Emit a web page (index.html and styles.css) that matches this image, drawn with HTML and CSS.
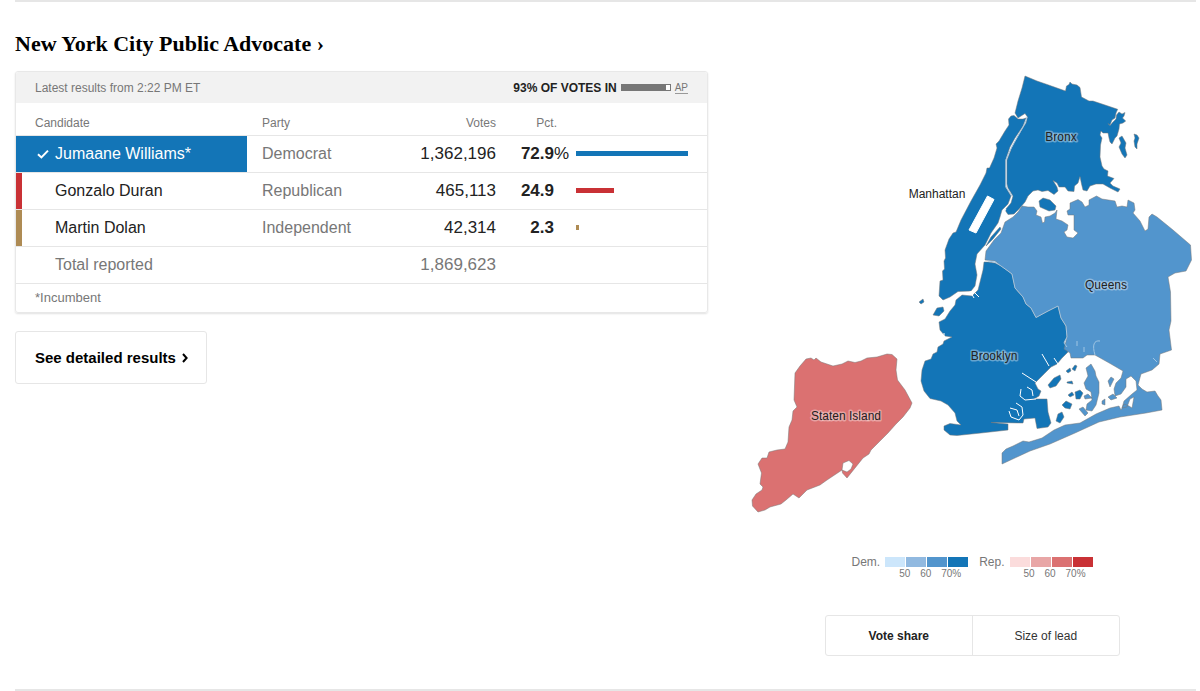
FILE: index.html
```html
<!DOCTYPE html>
<html lang="en">
<head>
<meta charset="utf-8">
<meta name="viewport" content="width=device-width, initial-scale=1">
<title>New York City Public Advocate</title>
<link rel="stylesheet" href="styles.css">
</head>
<body>
<main class="race">
  <section class="results">
    <h2 class="title"><a href="#race">New York City Public Advocate ›</a></h2>
    <div class="card">
      <header class="card-head">
        <span class="updated">Latest results from 2:22 PM ET</span>
        <span class="reporting"><strong>93% OF VOTES IN</strong><span class="meter"><span class="meter-fill" style="width:93%"></span></span><a class="source" href="#ap">AP</a></span>
      </header>
      <table class="table">
        <thead>
          <tr><th class="c-name">Candidate</th><th class="c-party">Party</th><th class="c-votes">Votes</th><th class="c-pct">Pct.</th><th class="c-bar"></th></tr>
        </thead>
        <tbody>
          <tr class="dem winner">
            <td class="c-name"><div class="name"><svg class="check" viewBox="0 0 12 10" aria-label="Winner"><path d="M1 5.2 4.4 8.4 11 1.6"/></svg>Jumaane Williams*</div></td>
            <td class="c-party">Democrat</td><td class="c-votes">1,362,196</td>
            <td class="c-pct">72.9<span class="sign">%</span></td>
            <td class="c-bar"><div class="bar" style="width:100%"></div></td>
          </tr>
          <tr class="rep">
            <td class="c-name"><div class="name">Gonzalo Duran</div></td>
            <td class="c-party">Republican</td><td class="c-votes">465,113</td>
            <td class="c-pct">24.9<span class="sign"></span></td>
            <td class="c-bar"><div class="bar" style="width:34%"></div></td>
          </tr>
          <tr class="ind">
            <td class="c-name"><div class="name">Martin Dolan</div></td>
            <td class="c-party">Independent</td><td class="c-votes">42,314</td>
            <td class="c-pct">2.3<span class="sign"></span></td>
            <td class="c-bar"><div class="bar" style="width:3%"></div></td>
          </tr>
          <tr class="total">
            <td class="c-name"><div class="name">Total reported</div></td>
            <td></td><td class="c-votes">1,869,623</td><td></td><td></td>
          </tr>
        </tbody>
      </table>
      <p class="note">*Incumbent</p>
    </div>
    <a class="more" href="#detail">See detailed results <svg class="chevron" viewBox="0 0 6 10" aria-hidden="true"><path d="M1 1 4.6 5 1 9"/></svg></a>
  </section>

  <section class="map-panel">
    <svg class="map" viewBox="748 72 448 445" role="img" aria-label="Vote share by borough">
      <g class="boro strong">
        <path d="M1025 76 1037 81 1050 85.500 1065.500 91 1066.500 86 1069 84.500 1070 82 1072 84 1077 85 1080 87.500 1081.500 97 1089 101 1093 101 1105 105 1117.700 109.300 1116 113 1115 118 1112 120 1110 125 1108 123.500 1110 125.500 1113 122 1116 119 1116.500 115 1119 112 1122 114 1125 112.500 1124 116 1122.500 118 1125.700 121 1123 123 1119.500 124 1119 129 1117 136 1115 138 1112 144 1110 142 1109 138 1108 133 1103 133 1101 131 1100 135 1102 138 1100.500 145 1100 157 1102 166 1104 169 1108 171 1107.500 176 1114 178.500 1110 183 1113 186 1120 189 1118 192 1110 188 1103 184 1096 184 1090 186 1087 191 1083 190 1081.500 184 1080 176.500 1078 183 1074.500 186 1074 191.500 1068 191 1065 187 1059 187 1057 183 1053 180.500 1057 187 1058 191 1054 194.500 1048 190.500 1042 191.500 1038 190 1033 191 1028 196 1025 202 1019 209 1014 214 1008 214.500 1005 210 1011 203 1013 196 1008 188 1007 184 1007 160 1012 147 1018 136 1026 123 1027.500 117 1025 113.500 1021 116 1018 118 1015 113 1018 101 1022 88Z"/>
        <path d="M1119 138 1122 136 1126 143 1125 148 1127 155 1125 158 1122 154 1119 147 1121 143ZM1134 134 1137 135 1139 138 1137 144 1137 149 1135 147 1134 141 1135 138ZM1039 201 1043 198 1050 200 1056 206 1055 210 1049 211 1040 207Z"/>
        <path d="M1011 116 1014 115.500 1018 119 1023 119 1026 118 1023 126 1015 138 1010 147 1005.500 160 1005.500 187 1011 196 1008 204 1002 210 1000 217 998 223 991 233 985 245 977 254 975 264 977 275 975 286 971 291 958 291.500 950 297 943 300 939 296 940 281 943 280 942.500 271 944.500 269 944 261 945.500 258 945 250 949 239 953 233 956 232 961 220 971 201 980 185 986 173 987 168 989.500 168 994 158 997 148 996 144 999 141 1005 131 1009 125 1008.500 119Z"/>
        <path d="M988 262 995 263 1001 266 1008 271 1012 274 1015 288 1023 297 1026 304 1031 308 1036 317.500 1048 311 1058 306 1061 318 1066 326 1067 337 1064 342 1067 347 1068 352 1062 358 1057 364 1051 367 1045 373 1038 380 1035 383 1038 389 1041 391 1039 396 1034 399 1047 399 1048 412 1051 423 1048 427 1037 428.500 1035 418 1024 419 1023 423 991 422.500 1008 424 1008 430 981 433 957 435.500 950 435 944 430 944 426 950 423.500 961 425 957 421 955 413 948 405 941 401 930 398.500 924 391 921 381 922 370 925 361 931 359 933 354 937 352 938 347 943 344 944 341 952 337 945 336 940 330 939 322 945 319 950 311 955 305 956 300 962 295 972 296 978 290 981 278 983 270 984 262Z"/>
        <path d="M933 315 937 308 943 307 944 311 939 316ZM919 302 923 299 924 302 921 304ZM986 246 991 237 1000 227 1001 229 993 239Z"/>
        <path d="M1048 385 1054 378 1060 375 1061 379 1056 386 1050 388ZM1066 371 1070 368 1071 371 1068 373ZM1072 369 1075 365 1077 366 1075 371ZM1067 382 1072 381 1073 384 1067 383ZM1068 395 1072 392 1074 395 1070 397ZM1075 392 1080 390 1083 393 1080 399 1076 399ZM1062 405 1066 401 1072 404 1070 409 1065 408ZM1056 421 1058 414 1062 412 1064 417 1060 423Z"/>
      </g>
      <g class="boro medium">
        <path d="M985 260 986 251 994 240 1001 233 1005 222 1013 217 1018 212 1022 206 1028 207 1034 207 1037 211 1036 215 1041 217 1042.500 223 1044.500 222 1045 217 1050 216 1055 213 1057 210 1056 219 1062 221 1068 225 1067 230 1064 232 1067 237 1073 238 1078 233 1074 230 1074 215 1068 215 1067 211 1070 209 1070 203 1078 199.500 1082 202 1085 207 1089 205 1089 200 1096.500 196 1102 199 1115 201 1117 207 1122 206 1127 207 1128 200 1134 203 1135 210 1133 213 1140 221 1145 231 1148 229 1149 217 1152 214 1157 217 1173 230 1190.500 245 1191.500 260 1186 271 1175 273 1168 277 1170.500 292 1171 321 1169 330 1171.500 350 1160 354 1159 364 1152 370 1141 374 1138 385 1142 389 1147 392 1155 391 1158 396 1161 400 1162 410 1146 413 1120 417 1099 422 1075 433 1050 444 1030 451 1002 464 1002 453 1006 449 1013 446 1023 441 1029 442 1042 438 1054 430 1065 425 1080 423 1096 414 1110 408 1119 406 1121 410 1124 404 1129 406 1132 408 1134 397 1130 399 1127 407 1122 408 1124 401 1132 394 1137 390 1136 381 1131 376 1126 379 1126 387 1121 394 1115 396 1114 389 1116 383 1121 378 1123 371 1111 364 1095 355 1087 355 1083 358 1071 358 1070 353 1064 349 1067 337 1066 326 1061 318 1058 306 1048 311 1036 317.500 1031 308 1026 304 1023 297 1015 288 1012 274 1008 271 1001 266 995 261Z"/>
        <path d="M1086 368 1091 364 1095 371 1096 376 1099 382 1099 393 1096 405 1092 411 1086 410 1087 404 1092 400 1091 392 1086 389 1084 383 1088 376ZM1108 381 1111 377 1114 379 1110 387ZM1108 397 1113 394 1117 398 1111 400ZM1102 401 1105 399 1105 405 1102 404ZM1079 409 1083 407 1088 413 1085 416ZM1084 396 1088 394 1092 398 1085 399Z"/>
      </g>
      <g class="boro rep-medium">
        <path d="M811 358 814 360 816 358 821 362 833 366 842 364 848 361 855 362.500 861 361 867 358 877 357 887 354 892 354.500 897 359 896 370 897.500 380 905 390 912 403 910 408 903 417 896 424 888 433 880 441 871 450 869 454 863 458 855 468 847 478 842.500 473 842 470 847 472 851 469 853 464 849 460.500 843 463 842 470 827 480 820 485 807 490 803 494 799 498 793 494 786 500 781 504 770 507 765 510 758 512 752.500 506 752 500 756 494 762 490 763 487 760 484 761.500 473 758 464 762 458 767 458 769 452 777 450 785 449 788 442 789 427 792 420 793 411 797 407 794 400 795 373 800 366 806 359Z"/>
      </g>
      <g class="water">
        <path class="park" d="M987.500 196 994 199.500 976 233 969 230Z"/>
        <path d="M1002 215 1006 209M1022 373 1036 382M1042 354 1049 366M1054 358 1058 364M1021 389 1020 396 1025 400 1036 399M1027 387 1032 390 1033 396M1009 411 1011 417 1019 420 1023 415 1022 407 1016 403M1010 408 1017 410 1019 416M970 291 974 298M975 293 979 297M940 332 941 336 944 336 944 333"/>
      </g>
      <g class="border"><path d="M1027 117C1026 125 1010 147 1006 160V187L1012 196M988 261 995 262 1001 266 1008 271 1012 274 1015 288 1023 297 1026 304 1031 308 1036 317.500 1048 311 1058 306 1061 318 1066 326 1067 337 1064 343 1067 347M1095 355C1092 345 1094 340 1100 341M1077 341V346M1084 347V352M1153 358 1157 362"/></g>
      <g class="labels">
        <text x="1061" y="141">Bronx</text>
        <text x="937" y="198">Manhattan</text>
        <text x="1106" y="289">Queens</text>
        <text x="994" y="360">Brooklyn</text>
        <text x="846" y="420">Staten Island</text>
      </g>
    </svg>

    <div class="legend">
      <div class="scale"><span class="scale-name">Dem.</span>
        <div class="ramp"><i class="d1"></i><i class="d2"></i><i class="d3"></i><i class="d4"></i><span></span><span>50</span><span>60</span><span>70%</span></div>
      </div>
      <div class="scale"><span class="scale-name">Rep.</span>
        <div class="ramp"><i class="r1"></i><i class="r2"></i><i class="r3"></i><i class="r4"></i><span></span><span>50</span><span>60</span><span>70%</span></div>
      </div>
    </div>

    <div class="toggle">
      <button type="button" class="active" aria-pressed="true">Vote share</button>
      <button type="button" aria-pressed="false">Size of lead</button>
    </div>
  </section>
</main>
</body>
</html>
```
FILE: styles.css
```css
* { box-sizing: border-box; }

body {
  margin: 0;
  background: #fff;
  color: #222;
  font-family: "Liberation Sans", Arial, sans-serif;
  font-size: 12px;
}

a { color: inherit; text-decoration: none; }

.race {
  display: grid;
  grid-template-columns: minmax(0, 693fr) minmax(0, 448fr);
  column-gap: 40px;
  margin: 0 4px 0 15px;
  border-top: 2px solid #e6e6e6;
  border-bottom: 2px solid #e6e6e6;
}

.title {
  margin: 27px 0 12px;
  color: #000;
  font: bold 22px/30px "Liberation Serif", serif;
}

.card {
  border: 1px solid #e8e8e8;
  border-radius: 3px;
  box-shadow: 0 1px 2px rgba(0, 0, 0, .12);
  overflow: hidden;
}

.card-head {
  display: flex;
  justify-content: space-between;
  align-items: center;
  height: 31px;
  padding: 0 19px;
  background: #f2f2f2;
  color: #777;
}

.reporting { display: flex; align-items: center; }
.reporting strong { color: #222; }

.meter {
  width: 50px;
  height: 7px;
  margin: 0 4px;
  border: 1px solid #777;
  background: #fff;
}
.meter-fill { display: block; height: 100%; background: #777; }
.source { border-bottom: 1px solid #999; font-size: 10px; line-height: 11px; }

.table {
  width: 100%;
  border-collapse: collapse;
  table-layout: fixed;
  font-size: 16px;
}
.table th {
  height: 32px;
  padding: 8px 0 0;
  color: #777;
  font-size: 12px;
  font-weight: normal;
  text-align: left;
}
.table td { height: 37px; padding: 0; border-top: 1px solid #e6e6e6; }

.table .c-name { width: 231px; }
.table th.c-name { padding-left: 19px; }
.table .c-party { padding-left: 15px; color: #777; }
.table .c-votes { width: 130px; text-align: right; }
.table .c-pct { width: 80px; padding-right: 7px; font-weight: bold; text-align: right; }
.table td.c-votes, .table td.c-pct { font-size: 17px; }
.table th.c-pct { padding-right: 19px; font-weight: normal; }
.table .c-bar { width: 131px; padding-right: 19px; }

.name {
  display: flex;
  align-items: center;
  height: 36px;
  padding-left: 33px;
  border-left: 6px solid transparent;
}
.check {
  width: 12px;
  height: 10px;
  margin: 0 6px 0 -18px;
  fill: none;
  stroke: #fff;
  stroke-width: 2;
}
.sign { display: inline-block; width: 15px; font-weight: normal; text-align: left; }
.bar { height: 5px; }

.dem .bar, .winner .name { background: #1375b7; }
.rep .bar { background: #c93135; }
.ind .bar { background: #ae8b54; }
.winner .name { color: #fff; }
.rep .name { border-color: #c93135; }
.ind .name { border-color: #ae8b54; }
.table .total td { color: #777; }

.note {
  margin: 0;
  padding: 0 19px;
  border-top: 1px solid #e6e6e6;
  color: #777;
  font-size: 13px;
  line-height: 28px;
}

.more {
  display: inline-flex;
  align-items: center;
  gap: 6px;
  height: 53px;
  margin-top: 18px;
  padding: 0 18px 0 19px;
  border: 1px solid #e6e6e6;
  border-radius: 3px;
  color: #000;
  font-size: 15px;
  font-weight: bold;
}
.chevron { width: 6px; height: 10px; fill: none; stroke: #000; stroke-width: 2; }

.map-panel { display: flex; flex-direction: column; align-items: center; padding: 70px 0 33px; }
.map { display: block; width: 100%; }

.boro { stroke: #777; stroke-width: .5; stroke-linejoin: round; }
.strong { fill: #1375b7; }
.medium { fill: #5295cd; }
.rep-medium { fill: #db7171; }
.water path { fill: none; stroke: #fff; stroke-width: 1; }
.water .park { fill: #fff; }
.border path { fill: none; stroke: #9fc5e3; stroke-width: 1; }
.labels text {
  fill: #222;
  stroke: rgba(255, 255, 255, .35);
  stroke-width: 3;
  stroke-linejoin: round;
  paint-order: stroke;
  font-size: 12px;
  text-anchor: middle;
}

.legend { display: flex; gap: 11px; margin-top: 36px; color: #777; }
.scale { display: flex; gap: 5px; }
.scale-name { line-height: 18px; }
.ramp {
  display: grid;
  grid-template-columns: repeat(4, 20px);
  grid-template-rows: 10px 12px;
  column-gap: 1px;
  row-gap: 1px;
  margin-top: 4px;
  font-size: 10px;
  line-height: 12px;
}
.ramp span { justify-self: start; margin-left: -7px; }
.d1 { background: #cce6fb; }
.d2 { background: #91b9e0; }
.d3 { background: #5295cd; }
.d4 { background: #1375b7; }
.r1 { background: #fbdcdc; }
.r2 { background: #e8a6a6; }
.r3 { background: #db7171; }
.r4 { background: #c93135; }

.toggle {
  display: grid;
  grid-template-columns: 1fr 1fr;
  width: 295px;
  max-width: 100%;
  margin-top: 35px;
  border: 1px solid #e6e6e6;
  border-radius: 3px;
}
.toggle button {
  height: 39px;
  padding: 0;
  border: 0;
  background: none;
  color: #333;
  font: 12px "Liberation Sans", Arial, sans-serif;
}
.toggle button + button { border-left: 1px solid #e6e6e6; }
.toggle .active { color: #222; font-weight: bold; }
```
